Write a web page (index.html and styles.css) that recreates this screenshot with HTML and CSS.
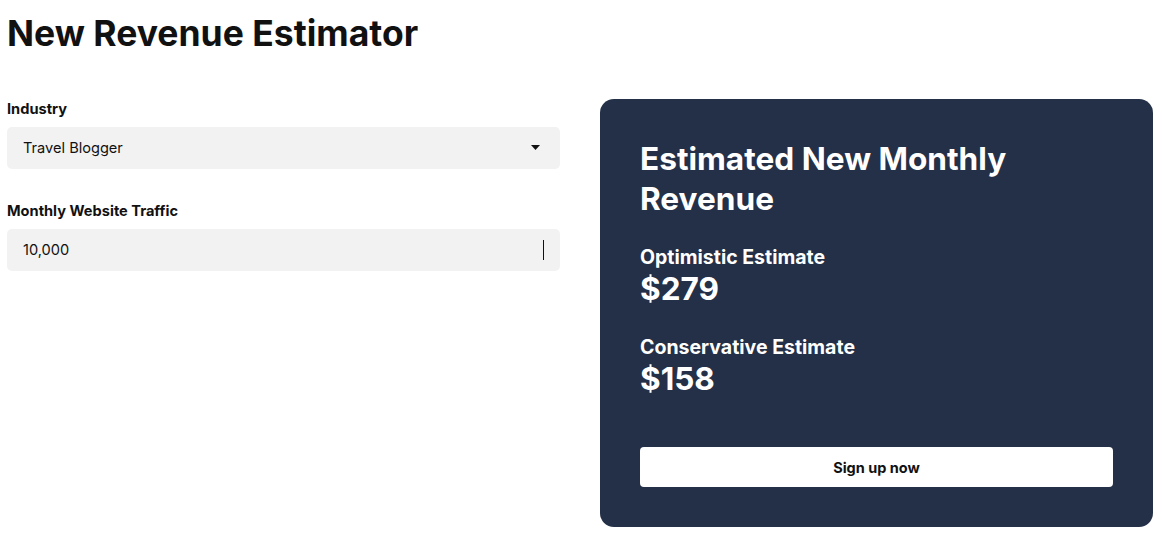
FILE: index.html
```html
<!DOCTYPE html>
<html lang="en">
<head>
  <meta charset="UTF-8" />
  <meta name="viewport" content="width=device-width, initial-scale=1.0"/>
  <title>New Revenue Estimator</title>
  <link rel="stylesheet" href="styles.css">
</head>
<body>
  <h1>New Revenue Estimator</h1>

  <div class="layout">
    <div class="form">
      <div class="input-group">
        <label for="industry">Industry</label>
        <div class="select-wrap">
          <select id="industry">
            <option>Travel Blogger</option>
          </select>
          <svg class="arrow" width="9" height="5" viewBox="0 0 9 5"><path d="M0 0h9L4.5 5z" fill="#111"/></svg>
        </div>
      </div>

      <div class="input-group">
        <label for="traffic">Monthly Website Traffic</label>
        <div class="input-wrap">
          <input type="text" id="traffic" value="10,000">
          <span class="caret"></span>
        </div>
      </div>
    </div>

    <div class="result">
      <h2>Estimated New Monthly Revenue</h2>

      <div class="estimate">
        <div class="estimate-label">Optimistic Estimate</div>
        <div class="estimate-value">$279</div>
      </div>

      <div class="estimate">
        <div class="estimate-label">Conservative Estimate</div>
        <div class="estimate-value">$158</div>
      </div>

      <button class="btn-signup">Sign up now</button>
    </div>
  </div>
</body>
</html>
```

FILE: styles.css
```css
body {
  font-family: 'Inter', 'Liberation Sans', sans-serif;
  background: #fff;
  color: #111;
  margin: 0;
  padding: 0 9px 0 7px;
}

h1 {
  font-size: 35.5px;
  font-weight: 700;
  margin: 0;
  padding-top: 14px;
  line-height: 40px;
  color: #111;
}

.layout {
  display: grid;
  grid-template-columns: 1fr 1fr;
  gap: 40px;
  margin-top: 45px;
}

.form {
  display: flex;
  flex-direction: column;
  gap: 32px;
}

.input-group {
  display: flex;
  flex-direction: column;
}

label {
  font-size: 14.6px;
  font-weight: 700;
  line-height: 20px;
  margin-bottom: 8px;
}

.select-wrap,
.input-wrap {
  position: relative;
}

select,
input {
  width: 100%;
  height: 42px;
  box-sizing: border-box;
  border: none;
  border-radius: 5px;
  background: #f2f2f2;
  font-family: inherit;
  font-size: 14.6px;
  color: #111;
  padding: 0 16px;
  outline: none;
  -webkit-appearance: none;
  appearance: none;
}

.arrow {
  position: absolute;
  right: 20px;
  top: 18px;
  pointer-events: none;
}

.caret {
  position: absolute;
  right: 16px;
  top: 11px;
  width: 1px;
  height: 20px;
  background: #111;
}

.result {
  background: #243047;
  border-radius: 14px;
  padding: 40px;
  color: #fff;
  display: flex;
  flex-direction: column;
}

.result h2 {
  font-size: 31.6px;
  font-weight: 700;
  line-height: 40px;
  margin: 0 0 25px;
  max-width: 400px;
}

.estimate {
  margin-bottom: 26px;
}

.estimate-label {
  font-size: 19.5px;
  font-weight: 700;
  line-height: 26px;
}

.estimate-value {
  font-size: 31.5px;
  font-weight: 700;
  line-height: 38px;
}

.btn-signup {
  margin-top: 23px;
  height: 40px;
  background: #fff;
  color: #111;
  border: none;
  border-radius: 4px;
  font-family: inherit;
  font-size: 14.5px;
  font-weight: 700;
  cursor: pointer;
}
```
